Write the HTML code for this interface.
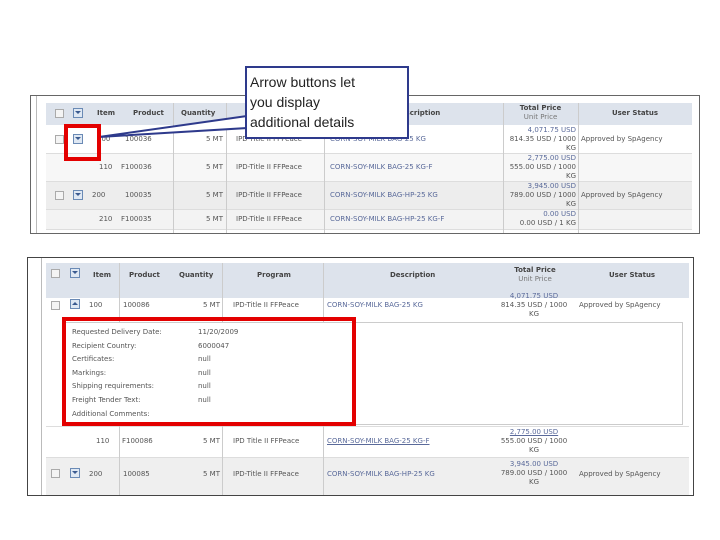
<!DOCTYPE html>
<html><head><meta charset="utf-8"><style>
body{margin:0;width:720px;height:540px;background:#fff;position:relative;overflow:hidden;font-family:"DejaVu Sans","Liberation Sans",sans-serif;}
.a{position:absolute;white-space:nowrap;font-size:7px;color:#555;line-height:9px;}
.b{font-weight:bold;color:#444;}
.l{color:#5a6a9a;}
.r{text-align:right;}
.c{text-align:center;}
.box{position:absolute;}
.cb{position:absolute;width:7px;height:7px;border:1px solid #aaa;background:#f4f4f4;}
.ar{position:absolute;width:8px;height:8px;border:1px solid #6a8ab5;background:#dfe8f3;}
.ar:after{content:"";position:absolute;left:1px;top:2px;border-left:3px solid transparent;border-right:3px solid transparent;border-top:3px solid #3a5a90;}
.ar.up:after{border-top:none;border-bottom:3px solid #3a5a90;top:2px;}
.vl{position:absolute;width:1px;background:#ccc;}
.hl{position:absolute;height:1px;background:#ddd;}
</style></head><body>

<!-- TOP PANEL -->
<div class="box" style="left:30px;top:95px;width:668px;height:137px;border:1px solid #666;"></div>
<div class="vl" style="left:36px;top:96px;height:137px;background:#bbb"></div>
<div class="box" style="left:46px;top:103px;width:646px;height:22px;background:#dde3ec"></div>
<div class="box" style="left:46px;top:153px;width:646px;height:28px;background:#f7f7f7"></div>
<div class="box" style="left:46px;top:182px;width:646px;height:27px;background:#ededed"></div>
<div class="box" style="left:46px;top:209px;width:646px;height:20px;background:#f3f3f3"></div>
<div class="hl" style="left:46px;top:153px;width:646px"></div>
<div class="hl" style="left:46px;top:181px;width:646px"></div>
<div class="hl" style="left:46px;top:209px;width:646px"></div>
<div class="hl" style="left:46px;top:229px;width:646px"></div>
<div class="vl" style="left:173px;top:103px;height:130px"></div>
<div class="vl" style="left:226px;top:103px;height:130px"></div>
<div class="vl" style="left:324px;top:103px;height:130px"></div>
<div class="vl" style="left:503px;top:103px;height:130px"></div>
<div class="vl" style="left:578px;top:103px;height:130px"></div>

<div class="cb" style="left:55px;top:109px"></div><div class="ar" style="left:73px;top:108px"></div>
<div class="a b" style="left:97px;top:109px">Item</div>
<div class="a b" style="left:133px;top:109px">Product</div>
<div class="a b" style="left:181px;top:109px">Quantity</div>
<div class="a b" style="left:395px;top:109px">Description</div>
<div class="a b c" style="left:503px;top:104px;width:75px">Total Price<br><span style="font-weight:normal;color:#777">Unit Price</span></div>
<div class="a b c" style="left:578px;top:109px;width:114px">User Status</div>

<div class="cb" style="left:55px;top:135px"></div><div class="ar" style="left:73px;top:134px"></div>
<div class="a" style="left:97px;top:135px">100</div><div class="a" style="left:125px;top:135px">100036</div>
<div class="a r" style="left:173px;top:135px;width:50px">5 MT</div>
<div class="a" style="left:236px;top:135px">IPD-Title II FFPeace</div>
<div class="a l" style="left:330px;top:135px">CORN-SOY-MILK BAG-25 KG</div>
<div class="a r" style="left:500px;top:126px;width:76px"><span class="l">4,071.75 USD</span><br>814.35 USD / 1000<br>KG</div>
<div class="a" style="left:581px;top:135px">Approved by SpAgency</div>

<div class="a" style="left:99px;top:163px">110</div><div class="a" style="left:121px;top:163px">F100036</div>
<div class="a r" style="left:173px;top:163px;width:50px">5 MT</div>
<div class="a" style="left:236px;top:163px">IPD-Title II FFPeace</div>
<div class="a l" style="left:330px;top:163px">CORN-SOY-MILK BAG-25 KG-F</div>
<div class="a r" style="left:500px;top:154px;width:76px"><span class="l">2,775.00 USD</span><br>555.00 USD / 1000<br>KG</div>

<div class="cb" style="left:55px;top:191px"></div><div class="ar" style="left:73px;top:190px"></div>
<div class="a" style="left:92px;top:191px">200</div><div class="a" style="left:125px;top:191px">100035</div>
<div class="a r" style="left:173px;top:191px;width:50px">5 MT</div>
<div class="a" style="left:236px;top:191px">IPD-Title II FFPeace</div>
<div class="a l" style="left:330px;top:191px">CORN-SOY-MILK BAG-HP-25 KG</div>
<div class="a r" style="left:500px;top:182px;width:76px"><span class="l">3,945.00 USD</span><br>789.00 USD / 1000<br>KG</div>
<div class="a" style="left:581px;top:191px">Approved by SpAgency</div>

<div class="a" style="left:99px;top:215px">210</div><div class="a" style="left:121px;top:215px">F100035</div>
<div class="a r" style="left:173px;top:215px;width:50px">5 MT</div>
<div class="a" style="left:236px;top:215px">IPD-Title II FFPeace</div>
<div class="a l" style="left:330px;top:215px">CORN-SOY-MILK BAG-HP-25 KG-F</div>
<div class="a r" style="left:500px;top:210px;width:76px"><span class="l">0.00 USD</span><br>0.00 USD / 1 KG</div>

<!-- callout pointer -->
<svg style="position:absolute;left:0;top:0" width="720" height="540">
<polygon points="247,116 99,137 247,128" fill="#fff" stroke="#2e3a8c" stroke-width="2"/>
</svg>
<div class="box" style="left:64px;top:124px;width:29px;height:29px;border:4px solid #e30000"></div>
<div class="box" style="left:245px;top:66px;width:160px;height:69px;border:2px solid #2e3a8c;background:#fff"></div>
<div class="a" style="left:250px;top:72px;font-family:'Liberation Sans',sans-serif;font-size:14px;line-height:20px;color:#222">Arrow buttons let<br>you display<br>additional details</div>

<!-- BOTTOM PANEL -->
<div class="box" style="left:27px;top:257px;width:665px;height:237px;border:1px solid #444;"></div>
<div class="vl" style="left:41px;top:258px;height:237px;background:#bbb"></div>
<div class="box" style="left:46px;top:263px;width:643px;height:35px;background:#dde3ec"></div>
<div class="box" style="left:46px;top:457px;width:643px;height:38px;background:#efefef"></div>
<div class="hl" style="left:46px;top:426px;width:643px"></div>
<div class="hl" style="left:46px;top:457px;width:643px"></div>
<div class="vl" style="left:119px;top:263px;height:60px"></div>
<div class="vl" style="left:222px;top:263px;height:60px"></div>
<div class="vl" style="left:323px;top:263px;height:60px"></div>
<div class="vl" style="left:119px;top:426px;height:69px"></div>
<div class="vl" style="left:222px;top:426px;height:69px"></div>
<div class="vl" style="left:323px;top:426px;height:69px"></div>
<div class="box" style="left:62px;top:322px;width:619px;height:101px;border:1px solid #ccc"></div>

<div class="cb" style="left:51px;top:269px"></div><div class="ar" style="left:70px;top:268px"></div>
<div class="a b" style="left:93px;top:271px">Item</div>
<div class="a b" style="left:129px;top:271px">Product</div>
<div class="a b" style="left:179px;top:271px">Quantity</div>
<div class="a b" style="left:257px;top:271px">Program</div>
<div class="a b" style="left:390px;top:271px">Description</div>
<div class="a b c" style="left:500px;top:266px;width:70px">Total Price<br><span style="font-weight:normal;color:#777">Unit Price</span></div>
<div class="a b" style="left:609px;top:271px">User Status</div>

<div class="cb" style="left:51px;top:301px"></div><div class="ar up" style="left:70px;top:299px"></div>
<div class="a" style="left:89px;top:301px">100</div><div class="a" style="left:123px;top:301px">100086</div>
<div class="a r" style="left:170px;top:301px;width:50px">5 MT</div>
<div class="a" style="left:233px;top:301px">IPD-Title II FFPeace</div>
<div class="a l" style="left:327px;top:301px">CORN-SOY-MILK BAG-25 KG</div>
<div class="a r" style="left:490px;top:292px;width:88px;text-align:center"><span class="l">4,071.75 USD</span><br>814.35 USD / 1000<br>KG</div>
<div class="a" style="left:579px;top:301px">Approved by SpAgency</div>

<div class="a" style="left:72px;top:326px;line-height:13.6px">Requested Delivery Date:<br>Recipient Country:<br>Certificates:<br>Markings:<br>Shipping requirements:<br>Freight Tender Text:<br>Additional Comments:</div>
<div class="a" style="left:198px;top:326px;line-height:13.6px">11/20/2009<br>6000047<br>null<br>null<br>null<br>null</div>
<div class="box" style="left:62px;top:317px;width:286px;height:101px;border:4px solid #e30000"></div>

<div class="a" style="left:96px;top:437px">110</div><div class="a" style="left:122px;top:437px">F100086</div>
<div class="a r" style="left:170px;top:437px;width:50px">5 MT</div>
<div class="a" style="left:233px;top:437px">IPD Title II FFPeace</div>
<div class="a l" style="left:327px;top:437px;text-decoration:underline">CORN-SOY-MILK BAG-25 KG-F</div>
<div class="a" style="left:490px;top:428px;width:88px;text-align:center"><span class="l" style="text-decoration:underline">2,775.00 USD</span><br>555.00 USD / 1000<br>KG</div>

<div class="cb" style="left:51px;top:469px"></div><div class="ar" style="left:70px;top:468px"></div>
<div class="a" style="left:89px;top:470px">200</div><div class="a" style="left:123px;top:470px">100085</div>
<div class="a r" style="left:170px;top:470px;width:50px">5 MT</div>
<div class="a" style="left:233px;top:470px">IPD-Title II FFPeace</div>
<div class="a l" style="left:327px;top:470px">CORN-SOY-MILK BAG-HP-25 KG</div>
<div class="a" style="left:490px;top:460px;width:88px;text-align:center"><span class="l">3,945.00 USD</span><br>789.00 USD / 1000<br>KG</div>
<div class="a" style="left:579px;top:470px">Approved by SpAgency</div>

</body></html>
